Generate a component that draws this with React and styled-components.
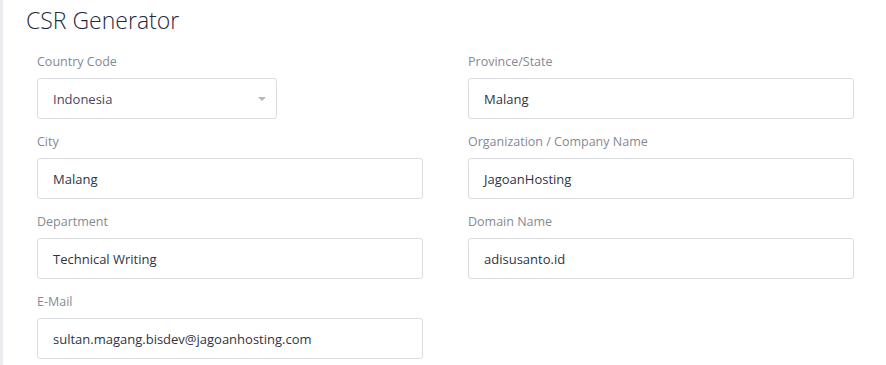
import styled, { createGlobalStyle } from 'styled-components';

const GlobalStyle = createGlobalStyle`
  html, body {
    margin: 0;
    padding: 0;
    background: #ffffff;
  }
  * {
    box-sizing: border-box;
  }
`;

const fields = [
  { label: 'Country Code', value: 'Indonesia', select: true },
  { label: 'Province/State', value: 'Malang' },
  { label: 'City', value: 'Malang' },
  { label: 'Organization / Company Name', value: 'JagoanHosting' },
  { label: 'Department', value: 'Technical Writing' },
  { label: 'Domain Name', value: 'adisusanto.id' },
  { label: 'E-Mail', value: 'sultan.magang.bisdev@jagoanhosting.com' }
];

const App = () => {
  return (
    <Page>
      <GlobalStyle />
      <Title>CSR Generator</Title>
      <FormGrid>
        {fields.map((f) => (
          <Field key={f.label}>
            <Label>{f.label}</Label>
            {f.select ? (
              <SelectBox>
                <span>{f.value}</span>
                <Caret />
              </SelectBox>
            ) : (
              <TextBox>{f.value}</TextBox>
            )}
          </Field>
        ))}
      </FormGrid>
    </Page>
  );
};

export default App;

const Page = styled.div`
  height: 365px;
  border-left: 3px solid #e9ebef;
  padding: 5px 0 0 23px;
  overflow: hidden;
`;

const Title = styled.h1`
  margin: 0;
  font-family: 'Open Sans', sans-serif;
  font-weight: 300;
  font-size: 23px;
  line-height: 30px;
  color: #1f2a3c;
`;

const FormGrid = styled.div`
  display: grid;
  grid-template-columns: 386px 386px;
  column-gap: 45px;
  padding: 18px 0 0 11px;
`;

const Field = styled.div`
  display: flex;
  flex-direction: column;
  padding-bottom: 14px;
`;

const Label = styled.label`
  font-family: 'Open Sans', sans-serif;
  font-size: 12.5px;
  line-height: 17px;
  color: #858a93;
  margin-bottom: 8px;
`;

const boxBase = `
  height: 41px;
  border: 1px solid #dcdde0;
  border-radius: 3px;
  background: #ffffff;
  display: flex;
  align-items: center;
  padding: 0 15px;
  font-family: 'Open Sans', sans-serif;
  font-size: 13px;
  color: #2f3442;
`;

const TextBox = styled.div`
  ${boxBase}
`;

const SelectBox = styled.div`
  ${boxBase}
  width: 240px;
  justify-content: space-between;
  color: #4a4560;
  padding-right: 10px;
`;

const Caret = styled.span`
  width: 0;
  height: 0;
  border-left: 4px solid transparent;
  border-right: 4px solid transparent;
  border-top: 4px solid #b4b7be;
`;
